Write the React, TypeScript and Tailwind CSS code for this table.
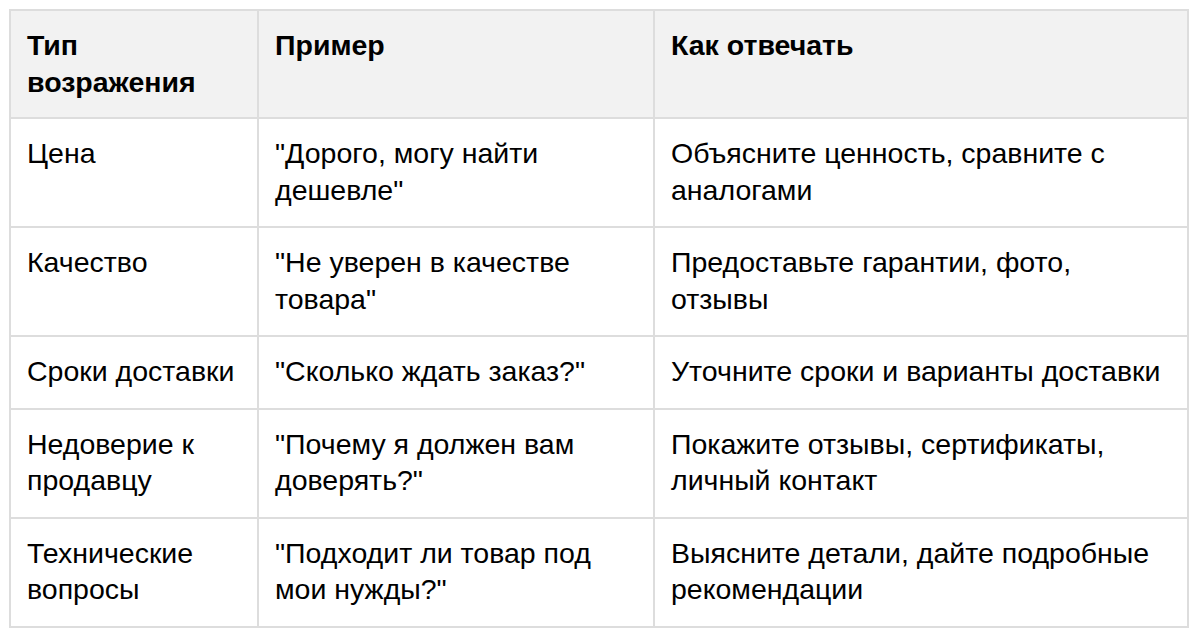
const rows = [
  {
    type: "Цена",
    example: '"Дорого, могу найти дешевле"',
    answer: "Объясните ценность, сравните с аналогами",
  },
  {
    type: "Качество",
    example: '"Не уверен в качестве товара"',
    answer: "Предоставьте гарантии, фото, отзывы",
  },
  {
    type: "Сроки доставки",
    example: '"Сколько ждать заказ?"',
    answer: "Уточните сроки и варианты доставки",
  },
  {
    type: "Недоверие к продавцу",
    example: '"Почему я должен вам доверять?"',
    answer: "Покажите отзывы, сертификаты, личный контакт",
  },
  {
    type: "Технические вопросы",
    example: '"Подходит ли товар под мои нужды?"',
    answer: "Выясните детали, дайте подробные рекомендации",
  },
];

export default function App() {
  return (
    <div className="min-h-[641px] bg-white pl-[9px] pt-[9px] font-['Liberation_Sans',Arial,sans-serif] text-[28.5px] leading-[36.5px] text-black">
      <table className="w-[1180px] table-fixed border-collapse">
        <colgroup>
          <col className="w-[248px]" />
          <col className="w-[396px]" />
          <col />
        </colgroup>
        <thead>
          <tr className="bg-[#f2f2f2]">
            <th className="border-2 border-[#dddddd] px-4 pt-4 pb-[17px] text-left align-top font-bold">
              Тип возражения
            </th>
            <th className="border-2 border-[#dddddd] px-4 pt-4 pb-[17px] text-left align-top font-bold">
              Пример
            </th>
            <th className="border-2 border-[#dddddd] px-4 pt-4 pb-[17px] text-left align-top font-bold">
              Как отвечать
            </th>
          </tr>
        </thead>
        <tbody>
          {rows.map((r) => (
            <tr key={r.type}>
              <td className="border-2 border-[#dddddd] px-4 pt-4 pb-[18px] align-top">{r.type}</td>
              <td className="border-2 border-[#dddddd] px-4 pt-4 pb-[18px] align-top">{r.example}</td>
              <td className="border-2 border-[#dddddd] px-4 pt-4 pb-[18px] align-top">{r.answer}</td>
            </tr>
          ))}
        </tbody>
      </table>
    </div>
  );
}
